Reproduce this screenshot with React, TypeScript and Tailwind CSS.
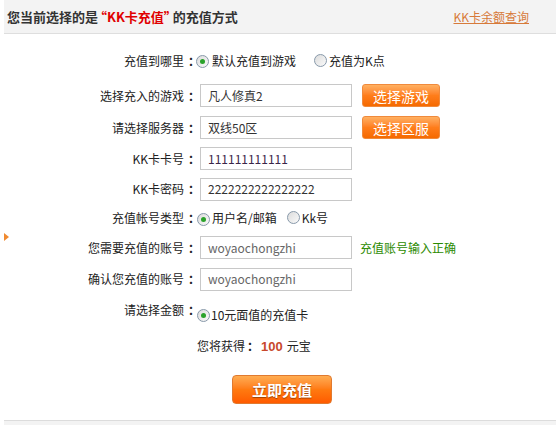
import React from "react";

const font = { fontFamily: '"Noto Sans CJK SC", "Liberation Sans", sans-serif' };

function Radio({ checked }: { checked?: boolean }) {
  return (
    <span className="relative inline-flex h-[13px] w-[13px] items-center justify-center rounded-full border border-[#8899aa] bg-gradient-to-br from-[#dcdcdc] to-[#fafafa]">
      {checked && <span className="h-[5px] w-[5px] rounded-full bg-[#2aa22a]" />}
    </span>
  );
}

function Label({ children, className = "" }: { children: React.ReactNode; className?: string }) {
  return (
    <div className={"w-[196px] shrink-0 text-right text-[#222] " + className}>
      {children}
      <span className="inline-block w-[12px] pl-[4px] text-left font-bold">：</span>
    </div>
  );
}

function Input({ value, color = "text-[#333]" }: { value: string; color?: string }) {
  return (
    <div className={"ml-[4px] flex h-[23px] w-[152px] items-center border border-[#c8c8c8] bg-white pl-[7px] " + color}>
      {value}
    </div>
  );
}

function OrangeBtn({ children }: { children: React.ReactNode }) {
  return (
    <div className="ml-[10px] flex h-[23px] w-[78px] items-center justify-center rounded-[3px] border border-[#f08a3c] bg-gradient-to-b from-[#ffb060] via-[#ff7d1a] to-[#f56a00] text-[14px] text-white">
      {children}
    </div>
  );
}

export default function App() {
  return (
    <div className="flex h-[425px] w-[556px] flex-col overflow-hidden bg-white text-[12px] leading-none" style={font}>
      <div className="ml-[4px] flex h-[34px] shrink-0 items-center justify-between border-b border-[#dedede] bg-[#f3f3f3] pl-[3px] pr-[27px]">
        <div className="text-[13px] font-bold text-[#333]">
          您当前选择的是<span className="ml-[-4px] text-[#e00000]">“KK卡充值”</span><span className="ml-[-4px]">的充值方式</span>
        </div>
        <a className="text-[#d77a3a] underline">KK卡余额查询</a>
      </div>

      <div className="relative flex flex-col">
        <div className="mt-[14px] flex h-[26px] items-center">
          <Label>充值到哪里</Label>
          <Radio checked />
          <span className="ml-[3px] text-[#222]">默认充值到游戏</span>
          <span className="ml-[18px]"><Radio /></span>
          <span className="ml-[2px] text-[#222]">充值为K点</span>
        </div>

        <div className="mt-[9px] flex h-[25px] items-center">
          <Label>选择充入的游戏</Label>
          <Input value="凡人修真2" />
          <OrangeBtn>选择游戏</OrangeBtn>
        </div>

        <div className="mt-[7px] flex h-[25px] items-center">
          <Label>请选择服务器</Label>
          <Input value="双线50区" />
          <OrangeBtn>选择区服</OrangeBtn>
        </div>

        <div className="mt-[6px] flex h-[25px] items-center">
          <Label>KK卡卡号</Label>
          <Input value="111111111111" color="text-[#3a2548]" />
        </div>

        <div className="mt-[6px] flex h-[24px] items-center">
          <Label>KK卡密码</Label>
          <Input value="2222222222222222" color="text-[#333]" />
        </div>

        <div className="mt-[5px] flex h-[24px] items-center">
          <Label>充值帐号类型</Label>
          <span className="ml-[1px]"><Radio checked /></span>
          <span className="ml-[2px] text-[#222]">用户名/邮箱</span>
          <span className="ml-[10px]"><Radio /></span>
          <span className="ml-[2px] text-[#222]">Kk号</span>
        </div>

        <div className="relative mt-[6px] flex h-[23px] items-center">
          <span className="absolute left-[4px] top-[-3px] h-0 w-0 border-y-[4px] border-l-[5px] border-y-transparent border-l-[#f08a30]" />
          <Label>您需要充值的账号</Label>
          <Input value="woyaochongzhi" color="text-[#666]" />
          <span className="ml-[8px] text-[#2b8a00]">充值账号输入正确</span>
        </div>

        <div className="mt-[8px] flex h-[24px] items-center">
          <Label>确认您充值的账号</Label>
          <Input value="woyaochongzhi" color="text-[#666]" />
        </div>

        <div className="mt-[9px] flex h-[24px] items-start">
          <Label className="pt-[4px]">请选择金额</Label>
          <span className="ml-[1px] mt-[7px]"><Radio checked /></span>
          <span className="ml-[1px] mt-[9px] text-[#222]">10元面值的充值卡</span>
        </div>

        <div className="mt-[10px] flex h-[24px] items-center pl-[197px] text-[#222]">
          您将获得<span className="inline-block w-[12px] pl-[2px] font-bold">：</span>
          <span className="ml-[4px] text-[13px] font-bold text-[#c8482c]" style={{ fontFamily: '"Liberation Sans", sans-serif' }}>100</span>
          <span className="ml-[4px]">元宝</span>
        </div>

        <div className="mt-[17px] flex pl-[232px]">
          <div className="flex h-[29px] w-[100px] items-center justify-center rounded-[4px] border border-[#e07a30] bg-gradient-to-b from-[#ffac50] via-[#ff7a10] to-[#ff5a00] text-[15px] font-bold text-white [text-shadow:0_1px_1px_#a04000]">
            立即充值
          </div>
        </div>

        <div className="ml-[4px] mt-[16px] h-[10px] border-t border-[#dcdcdc] bg-[#f3f3f3]" />
      </div>
    </div>
  );
}
